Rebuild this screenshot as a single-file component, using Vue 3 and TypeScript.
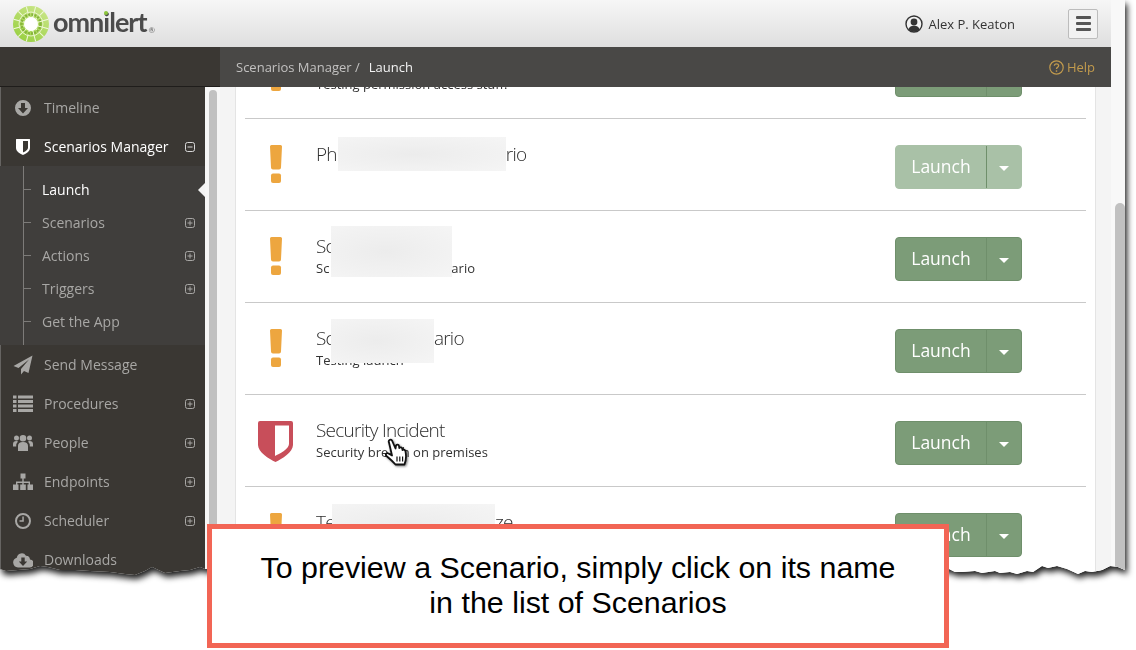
<script setup lang="ts">
interface NavItem {
  label: string
  d?: string
  expand?: 'plus' | 'minus'
  active?: boolean
  children?: { label: string; plus?: boolean; current?: boolean }[]
}

interface ScenarioRow {
  icon: 'warn' | 'shield'
  titleStart?: string
  titleBlur?: string
  titleEnd?: string
  subStart?: string
  subGap?: string
  subEnd?: string
  faded?: boolean
}

const nav: NavItem[] = [
  { label: 'Timeline', d: 'M10 2a8 8 0 1 0 0 16a8 8 0 1 0 0-16z M8 5h4v5h3l-5 5.5L5 10h3z' },
  {
    label: 'Scenarios Manager',
    d: 'M3.5 2H16.5Q17 2 17 2.5V11C17 14.5 12.500 17 10 18C7.500 17 3 14.500 3 11V2.500Q3 2 3.500 2Z M10 4V15.500C12 14.500 15 13 15 10.500V4Z',
    expand: 'minus',
    active: true,
    children: [
      { label: 'Launch', current: true },
      { label: 'Scenarios', plus: true },
      { label: 'Actions', plus: true },
      { label: 'Triggers', plus: true },
      { label: 'Get the App' },
    ],
  },
  { label: 'Send Message', d: 'M19.500 0.500L0.500 11L5.500 13L16 4.500L8 14V19.500L11 16L15.500 18Z' },
  {
    label: 'Procedures',
    d: 'M0 1.500h3.500v3H0z M5 1.500h15v3H5z M0 6h3.500v3H0z M5 6h15v3H5z M0 10.500h3.500v3H0z M5 10.500h15v3H5z M0 15h3.500v3H0z M5 15h15v3H5z',
    expand: 'plus',
  },
  {
    label: 'People',
    d: 'M10 2a3.300 3.300 0 1 0 0 6.600a3.300 3.300 0 1 0 0-6.600z M3.500 2.500a2.500 2.500 0 1 0 0 5a2.500 2.500 0 1 0 0-5z M16.500 2.500a2.500 2.500 0 1 0 0 5a2.500 2.500 0 1 0 0-5z M5 18v-5q0-4 5-4t5 4v5z M0 13.500v-2.500q0-3 3.500-3q1 0 1.500.5q-1.800 1.500-1.800 5z M20 13.500v-2.500q0-3-3.500-3q-1 0-1.500.5q1.800 1.500 1.800 5z',
    expand: 'plus',
  },
  {
    label: 'Endpoints',
    d: 'M7.500 1.500h5v5h-5z M9.300 6.500h1.400v3h6.300v3h-1.400v-1.600h-4.900v1.600H9.300v-1.600H4.400v1.600H3v-3h6.300z M0 12.500h5.500v5.500H0z M7.200 12.500h5.600v5.500H7.200z M14.500 12.500H20v5.500h-5.500z',
    expand: 'plus',
  },
  {
    label: 'Scheduler',
    d: 'M10 2a8 8 0 1 0 0 16a8 8 0 1 0 0-16z M10 4a6 6 0 1 1 0 12a6 6 0 1 1 0-12z M9.300 5.500h1.500v5.300H6.500v-1.500h2.800z',
    expand: 'plus',
  },
  {
    label: 'Downloads',
    d: 'M5 17.500a5 5 0 0 1-1.200-9.800a5 5 0 0 1 9.200-2a4 4 0 0 1 4 3.800a4 4 0 0 1-1 8z M8.300 7.500h3.400v4h2.500L10 16L5.800 11.500h2.500z',
  },
]

const rows: ScenarioRow[] = [
  { icon: 'warn', subStart: 'Testing permission access stuff.' },
  { icon: 'warn', titleStart: 'Ph', titleBlur: 'b1', titleEnd: 'rio', faded: true },
  { icon: 'warn', titleStart: 'Sc', titleBlur: 'b2', subStart: 'Sc', subGap: 'g2', subEnd: 'ario' },
  { icon: 'warn', titleStart: 'Sc', titleBlur: 'b3', titleEnd: 'ario', subStart: 'Testing launch' },
  { icon: 'shield', titleStart: 'Security Incident', subStart: 'Security breach on premises' },
  { icon: 'warn', titleStart: 'Te', titleBlur: 'b5', titleEnd: 'ze' },
]

const spokes: number[] = Array.from({ length: 12 }, (_, i) => i * 30 + 15)
</script>

<template>
  <div class="page">
    <div class="shadow">
      <div class="screen">
        <div class="app">
          <header class="top">
            <div class="brand">
              <svg class="wheel" width="36" height="36" viewBox="0 0 36 36">
                <defs>
                  <linearGradient id="wheelFill" x1="0.800" y1="0" x2="0.200" y2="1">
                    <stop offset="0" stop-color="#cbe68a" />
                    <stop offset="1" stop-color="#97cf3f" />
                  </linearGradient>
                </defs>
                <circle cx="18" cy="18" r="18" fill="url(#wheelFill)" />
                <line
                  v-for="a in spokes"
                  :key="a"
                  x1="18"
                  y1="18"
                  x2="18"
                  y2="0"
                  stroke="#f1f8dd"
                  stroke-width="1"
                  :transform="`rotate(${a} 18 18)`"
                />
                <circle cx="18" cy="18" r="12" fill="none" stroke="#e8f4c8" stroke-width="1" />
                <circle cx="18" cy="18" r="9.500" fill="none" stroke="#86b53a" stroke-width="2.600" stroke-dasharray="2 1.200" />
                <circle cx="18" cy="18" r="7" fill="#fff" />
              </svg>
              <span class="wordmark">omnilert<i class="reg">®</i><span class="dot"></span></span>
            </div>
            <div class="user">
              <svg width="18" height="18" viewBox="0 0 18 18">
                <circle cx="9" cy="9" r="8" fill="#f2f2f2" stroke="#333" stroke-width="1.400" />
                <circle cx="9" cy="7" r="3.400" fill="#333" />
                <path d="M3.500 14.500q.5-3.800 5.500-3.800t5.500 3.800q-2.300 2.200-5.500 2.200t-5.500-2.200z" fill="#333" />
              </svg>
              <span>Alex P. Keaton</span>
            </div>
            <button class="burger" type="button" aria-label="Menu">
              <span></span><span></span><span></span>
            </button>
          </header>

          <div class="crumbbar">
            <div class="crumb-left"></div>
            <div class="crumb-right">
              <span class="crumb">Scenarios Manager&nbsp;/<b>Launch</b></span>
              <span class="help">
                <svg width="15" height="15" viewBox="0 0 15 15">
                  <circle cx="7.500" cy="7.500" r="6.700" fill="none" stroke="#c19a4d" stroke-width="1.200" />
                  <path d="M5.300 5.800q.2-2 2.200-2t2.200 1.800q0 1.100-1.200 1.800q-1 .6-1 1.500" fill="none" stroke="#c19a4d" stroke-width="1.300" />
                  <rect x="6.800" y="10.300" width="1.400" height="1.500" fill="#c19a4d" />
                </svg>
                Help
              </span>
            </div>
          </div>

          <div class="body">
            <nav class="side">
              <template v-for="item in nav" :key="item.label">
                <div class="nav-item" :class="{ active: item.active }">
                  <svg class="nav-icon" width="20" height="20" viewBox="0 0 20 20">
                    <path :d="item.d" fill="currentColor" fill-rule="evenodd" />
                  </svg>
                  <span class="nav-label">{{ item.label }}</span>
                  <svg v-if="item.expand" class="exp" width="10" height="10" viewBox="0 0 10 10">
                    <rect x="0.500" y="0.500" width="9" height="9" rx="2" fill="none" stroke="currentColor" />
                    <path :d="item.expand === 'plus' ? 'M2.500 5h5M5 2.500v5' : 'M2.500 5h5'" stroke="currentColor" />
                  </svg>
                </div>
                <div v-if="item.children" class="subnav">
                  <div
                    v-for="child in item.children"
                    :key="child.label"
                    class="sub-item"
                    :class="{ current: child.current }"
                  >
                    <span class="tick"></span>
                    <span>{{ child.label }}</span>
                    <svg v-if="child.plus" class="exp" width="10" height="10" viewBox="0 0 10 10">
                      <rect x="0.500" y="0.500" width="9" height="9" rx="2" fill="none" stroke="currentColor" />
                      <path d="M2.500 5h5M5 2.500v5" stroke="currentColor" />
                    </svg>
                    <span v-if="child.current" class="pointer"></span>
                  </div>
                </div>
              </template>
            </nav>
            <div class="side-track"><div class="side-thumb"></div></div>
            <main class="main">
              <div class="list">
                <div v-for="(row, i) in rows" :key="i" class="row">
                  <div class="row-icon">
                    <svg v-if="row.icon === 'warn'" width="12" height="38" viewBox="0 0 12 38">
                      <path d="M1.500 0h9Q12 0 12 1.500L11 22.500Q11 24.500 9 24.500H3Q1 24.500 1 22.500L0 1.500Q0 0 1.500 0z" fill="#eda63f" />
                      <rect x="1" y="28.500" width="10" height="9.500" rx="2" fill="#eda63f" />
                    </svg>
                    <svg v-else width="35" height="41" viewBox="0 0 35 41">
                      <path
                        d="M2 0H33Q35 0 35 2V24C35 31 24 38 17.500 41C11 38 0 31 0 24V2Q0 0 2 0Z M17 4.500V35C21 33 31 28 31 23V4.500Z"
                        fill="#c84e5a"
                        fill-rule="evenodd"
                      />
                    </svg>
                  </div>
                  <div class="row-text">
                    <div class="title">
                      {{ row.titleStart }}<span v-if="row.titleBlur" class="redact" :class="row.titleBlur"></span>{{ row.titleEnd }}
                    </div>
                    <div class="sub">
                      {{ row.subStart }}<span v-if="row.subGap" class="gap" :class="row.subGap"></span>{{ row.subEnd }}
                    </div>
                  </div>
                  <div class="split" :class="{ faded: row.faded }">
                    <span class="split-main">Launch</span>
                    <span class="split-caret"><i></i></span>
                  </div>
                </div>
              </div>
              <svg class="hand" width="28" height="32" viewBox="0 0 28 32">
                <path
                  d="M6 4.500C5 2.500 7.500 .5 9 2.500L12.500 10.500L13 7.500C14 6 15.800 6.500 16 8L16.300 10C17.300 8.800 19 9.300 19.300 10.800L19.500 12C20.800 11.200 22.300 12 22.500 13.500C23.300 17.500 23.300 22 21.500 26.500H12.500C9.500 23 6.500 20.500 3.500 18C2 16.500 3.500 14.500 5.500 15.500L9 17.500Z"
                  fill="#fff"
                  stroke="#111"
                  stroke-width="1.800"
                  stroke-linejoin="round"
                />
                <path d="M14 18.500v5M16.800 18.500v5M19.600 18.500v5" stroke="#111" stroke-width="1.200" />
              </svg>
            </main>
          </div>
        </div>
        <div class="page-track"><div class="page-thumb"></div></div>
      </div>
    </div>

    <aside class="callout">
      To preview a Scenario, simply click on its name<br />in the list of Scenarios
    </aside>
  </div>
</template>

<style scoped>
.page {
  position: relative;
  width: 1136px;
  height: 650px;
  overflow: hidden;
  background: #fff;
  font-family: "Open Sans", "Liberation Sans", sans-serif;
}
.shadow {
  filter: drop-shadow(2px 4px 3px rgba(0, 0, 0, 0.9));
}
.screen {
  display: flex;
  width: 1125px;
  height: 590px;
  background: #fff;
  clip-path: polygon(
    0 0, 1125px 0, 1125px 570px, 1118px 567px, 1110px 566px, 1102px 570px, 1092px 572px,
    1085px 571px, 1078px 574px, 1067px 569px, 1057px 566px, 1048px 568px, 1042px 566px,
    1033px 572px, 1027px 571px, 1017px 574px, 1010px 572px, 1000px 573px, 995px 571px,
    982px 573px, 975px 571px, 962px 572px, 955px 572px, 949px 569px, 700px 571px, 400px 571px,
    205px 569px, 200px 567px, 190px 570px, 180px 571px, 165px 573px, 152px 567px, 145px 571px,
    135px 575px, 125px 574px, 110px 572px, 90px 571px, 75px 570px, 60px 570px, 48px 567px,
    40px 566px, 30px 569px, 18px 570px, 6px 571px, 0 569px
  );
}
.app {
  width: 1111px;
  display: flex;
  flex-direction: column;
}
.top {
  height: 47px;
  display: flex;
  align-items: center;
  background: linear-gradient(#f6f6f6, #dfdfdf);
  padding: 0 13px;
  box-sizing: border-box;
}
.brand {
  display: flex;
  align-items: center;
  gap: 4px;
  margin-right: auto;
}
.wheel {
  display: block;
}
.wordmark {
  position: relative;
  top: 2px;
  font-family: Lato, "Open Sans", sans-serif;
  font-weight: 700;
  font-size: 27px;
  line-height: 36px;
  letter-spacing: -1px;
  color: #4b4b4b;
}
.dot {
  position: absolute;
  left: 51px;
  top: 7px;
  width: 4px;
  height: 4px;
  border-radius: 50%;
  background: #8cc63c;
}
.reg {
  font-style: normal;
  font-weight: 400;
  font-size: 8px;
  letter-spacing: 0;
  margin-left: 2px;
  color: #666;
  vertical-align: -1px;
}
.user {
  display: flex;
  align-items: center;
  gap: 5px;
  font-size: 13px;
  color: #333;
  margin-right: 53px;
}
.user svg {
  display: block;
}
.burger {
  width: 30px;
  height: 30px;
  padding: 0;
  border: 1px solid #bcbcbc;
  border-radius: 2px;
  background: #f2f2f2;
  display: flex;
  flex-direction: column;
  justify-content: center;
  align-items: center;
  gap: 3px;
}
.burger span {
  width: 15px;
  height: 3px;
  background: #555;
  border-radius: 1px;
}
.crumbbar {
  height: 40px;
  display: flex;
}
.crumb-left {
  width: 220px;
  background: #3a3733;
  border-bottom: 1px solid #1f1d1b;
  box-sizing: border-box;
}
.crumb-right {
  flex: 1;
  background: #494846;
  display: flex;
  align-items: center;
  justify-content: space-between;
  padding: 0 16px;
  font-size: 13px;
}
.crumb {
  color: #c2c1c0;
}
.crumb b {
  font-weight: 400;
  color: #f2f2f2;
  margin-left: 9px;
}
.help {
  display: flex;
  align-items: center;
  gap: 3px;
  color: #c19a4d;
}
.body {
  flex: 1;
  display: flex;
  min-height: 0;
}
.side {
  width: 205px;
  background: #3a3733;
  box-shadow: inset 1px 0 0 #666462;
  padding-top: 1px;
  overflow: hidden;
}
.nav-item {
  height: 39px;
  display: flex;
  align-items: center;
  padding-left: 13px;
  padding-right: 10px;
  color: #a8a7a5;
  font-size: 14px;
}
.nav-item.active {
  color: #fff;
}
.nav-icon {
  flex: none;
  margin-right: 11px;
}
.nav-label {
  flex: 1;
  white-space: nowrap;
}
.exp {
  flex: none;
  color: #a8a7a5;
}
.nav-item.active .exp {
  color: #d8d8d8;
}
.subnav {
  background: #403e3c;
  padding: 7px 0 7px 0;
  position: relative;
}
.subnav::before {
  content: "";
  position: absolute;
  left: 23px;
  top: 0;
  bottom: 0;
  width: 1px;
  background: #7d7b79;
}
.sub-item {
  position: relative;
  height: 33px;
  display: flex;
  align-items: center;
  justify-content: space-between;
  padding: 0 10px 0 42px;
  color: #a8a7a5;
  font-size: 14px;
}
.sub-item.current {
  color: #fff;
}
.tick {
  position: absolute;
  left: 24px;
  top: 16px;
  width: 7px;
  height: 1px;
  background: #7d7b79;
}
.pointer {
  position: absolute;
  right: 0;
  top: 10px;
  border-style: solid;
  border-width: 7px 7px 7px 0;
  border-color: transparent #f3f3f3 transparent transparent;
}
.side-track {
  width: 15px;
  background: #f6f6f6;
  position: relative;
}
.side-thumb {
  position: absolute;
  left: 4px;
  top: 3px;
  bottom: 0;
  width: 8px;
  border-radius: 4px 4px 0 0;
  background: #c1c1c1;
}
.main {
  flex: 1;
  position: relative;
  min-width: 0;
  overflow: hidden;
  background: #fff;
  border-left: 15px solid #f4f4f4;
  border-right: 15px solid #f4f4f4;
  box-shadow: inset 1px 0 0 #e4e4e4, inset -1px 0 0 #e4e4e4;
  padding: 0 10px;
}
.list {
  margin-top: -60px;
}
.row {
  height: 91px;
  display: flex;
  border-bottom: 1px solid #c9c9c9;
}
.row-icon {
  flex: none;
  width: 61px;
  margin-right: 10px;
  padding-top: 26px;
  display: flex;
  justify-content: center;
  align-items: flex-start;
}
.row-icon svg {
  display: block;
}
.row-text {
  flex: 1;
  padding-top: 23px;
  min-width: 0;
}
.title {
  height: 24px;
  line-height: 24px;
  font-size: 19px;
  font-weight: 300;
  letter-spacing: -0.750px;
  color: #2e2e2e;
  white-space: nowrap;
}
.sub {
  height: 20px;
  line-height: 20px;
  font-size: 13px;
  color: #333;
  white-space: nowrap;
}
.redact {
  position: relative;
  z-index: 1;
  display: inline-block;
  vertical-align: top;
  background: radial-gradient(ellipse at 45% 50%, #ececec, #f5f5f5);
}
.b1 {
  width: 168px;
  height: 34px;
  margin: -5px 0 -5px 1px;
}
.b2 {
  width: 121px;
  height: 51px;
  margin: -8px 0 -19px -3px;
}
.b3 {
  width: 103px;
  height: 44px;
  margin: -7px 0 -13px -3px;
}
.b5 {
  width: 163px;
  height: 40px;
  margin: -6px 0 -10px -3px;
}
.gap {
  display: inline-block;
}
.g2 {
  width: 122px;
}
.split {
  flex: none;
  align-self: flex-start;
  margin: 26px 64px 0 0;
  width: 127px;
  height: 44px;
  box-sizing: border-box;
  display: flex;
  border: 1px solid #6f8f6b;
  border-radius: 4px;
  background: #7c9c78;
  color: #fff;
  font-size: 17.500px;
}
.split.faded {
  background: #a9c1a7;
  border-color: #a9c1a7;
}
.split-main {
  width: 91px;
  display: flex;
  align-items: center;
  justify-content: center;
  padding-bottom: 2px;
  box-sizing: border-box;
  border-right: 1px solid #6f8f6b;
}
.split-caret {
  flex: 1;
  display: flex;
  align-items: center;
  justify-content: center;
}
.split-caret i {
  margin-top: 2px;
  border-style: solid;
  border-width: 5px 5px 0;
  border-color: #fff transparent transparent;
}
.hand {
  position: absolute;
  left: 148px;
  top: 351px;
  filter: drop-shadow(1px 1px 1px rgba(0, 0, 0, 0.5));
}
.page-track {
  width: 14px;
  background: #f8f8f8;
  position: relative;
}
.page-thumb {
  position: absolute;
  left: 4px;
  top: 203px;
  bottom: 0;
  width: 10px;
  border-radius: 5px 5px 0 0;
  background: #c1c1c1;
}
.callout {
  position: absolute;
  left: 207px;
  top: 524px;
  width: 742px;
  height: 124px;
  box-sizing: border-box;
  border: 5px solid #f26555;
  background: #fff;
  font-family: "Liberation Sans", Arial, sans-serif;
  font-size: 30.400px;
  line-height: 35px;
  color: #000;
  text-align: center;
  padding-top: 21px;
}
</style>
